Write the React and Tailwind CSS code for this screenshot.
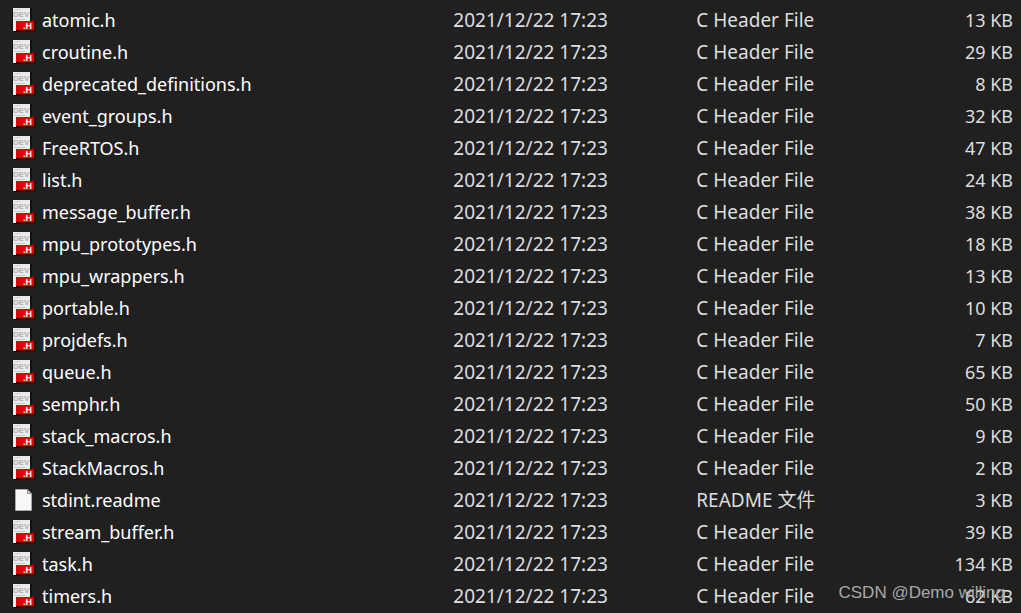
import React from 'react'

const MODIFIED = '2021/12/22 17:23'

const files = [
  { name: 'atomic.h', size: 13 },
  { name: 'croutine.h', size: 29 },
  { name: 'deprecated_definitions.h', size: 8 },
  { name: 'event_groups.h', size: 32 },
  { name: 'FreeRTOS.h', size: 47 },
  { name: 'list.h', size: 24 },
  { name: 'message_buffer.h', size: 38 },
  { name: 'mpu_prototypes.h', size: 18 },
  { name: 'mpu_wrappers.h', size: 13 },
  { name: 'portable.h', size: 10 },
  { name: 'projdefs.h', size: 7 },
  { name: 'queue.h', size: 65 },
  { name: 'semphr.h', size: 50 },
  { name: 'stack_macros.h', size: 9 },
  { name: 'StackMacros.h', size: 2 },
  { name: 'stdint.readme', size: 3, type: 'README 文件' },
  { name: 'stream_buffer.h', size: 39 },
  { name: 'task.h', size: 134 },
  { name: 'timers.h', size: 62 },
]

function HeaderIcon() {
  return (
    <svg className="h-6 w-6 shrink-0" viewBox="0 0 24 24" aria-hidden="true">
      <rect x="0" y="0" width="20" height="24" fill="#111" />
      <rect x="1" y="0" width="17" height="23" fill="#ececec" />
      <path d="M3 1.5h6M2 11.5h11" stroke="#cacaca" strokeWidth="1" />
      <text x="1" y="9" fontSize="8" fontWeight="700" fill="#b0b0b0" className="font-['Liberation_Sans',sans-serif]">
        DEV
      </text>
      <rect x="4" y="13" width="20" height="10" fill="#4a0000" />
      <rect x="4" y="13" width="18" height="9" fill="#dc0404" />
      <text x="11" y="21" fontSize="9" fontWeight="700" fill="#fff" className="font-['Liberation_Sans',sans-serif]">
        .H
      </text>
    </svg>
  )
}

function PlainIcon() {
  return (
    <svg className="h-6 w-6 shrink-0" viewBox="0 0 24 24" aria-hidden="true">
      <path d="M3.5 1.5h12l4 4v17h-16z" fill="#f7f7f7" stroke="#a9a9a9" />
      <path d="M15.5 1.5v4h4z" fill="#dcdcdc" stroke="#8f8f8f" />
    </svg>
  )
}

function FileRow({ file }) {
  return (
    <tr className="h-8">
      <td className="p-0 pl-3 text-lg leading-8">
        <div className="flex items-center gap-1.5 text-white">
          {file.type ? <PlainIcon /> : <HeaderIcon />}
          <span>{file.name}</span>
        </div>
      </td>
      <td className="p-0">{MODIFIED}</td>
      <td className="p-0">{file.type || 'C Header File'}</td>
      <td className="p-0 pr-2 text-right text-lg leading-8">{file.size} KB</td>
    </tr>
  )
}

export default function App() {
  return (
    <div className="relative min-h-screen bg-[#202020] pt-1 font-['Noto_Sans','Noto_Sans_CJK_SC',sans-serif] text-[19px] leading-8 text-[#dedede]">
      <table className="w-full table-fixed border-collapse whitespace-nowrap">
        <colgroup>
          <col className="w-[44.4%]" />
          <col className="w-[23.8%]" />
          <col className="w-[18%]" />
          <col />
        </colgroup>
        <tbody>
          {files.map((file) => (
            <FileRow key={file.name} file={file} />
          ))}
        </tbody>
      </table>
      {/* watermark */}
      <span className="absolute right-4 bottom-2 font-['Liberation_Sans',sans-serif] text-[17px] leading-6 text-[#a8a8a8]">
        CSDN @Demo willing
      </span>
    </div>
  )
}
